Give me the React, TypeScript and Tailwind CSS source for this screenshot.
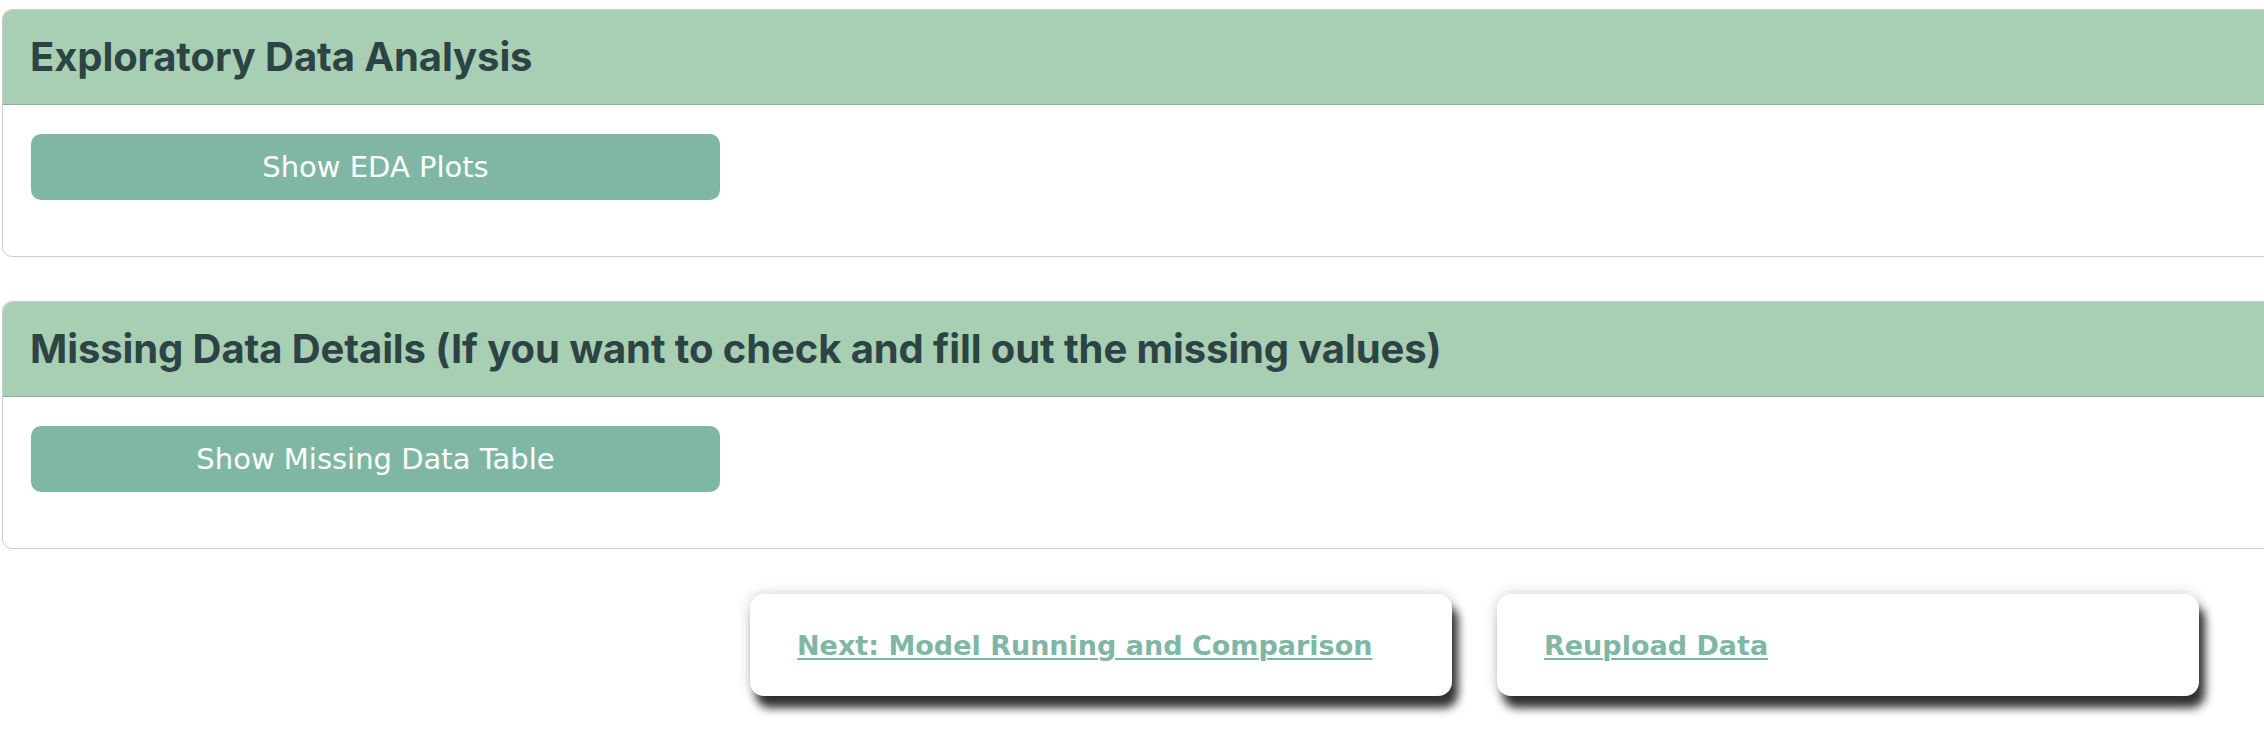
import React from 'react';

const sections = [
  { title: 'Exploratory Data Analysis', button: 'Show EDA Plots' },
  { title: 'Missing Data Details (If you want to check and fill out the missing values)', button: 'Show Missing Data Table' },
];

const links = ['Next: Model Running and Comparison', 'Reupload Data'];

const App: React.FC = () => {
  return (
    <div className="w-full min-h-[752px] overflow-hidden bg-white">
      <div className="pt-[9px] pl-[2px] flex flex-col gap-[44px] w-[2400px]">
        {sections.map((s) => (
          <div key={s.title} className="border border-[#cccccc] rounded-[10px] overflow-hidden bg-white">
            <div className="h-[95px] bg-[#a8cfb3] border-b border-[#8fae98] flex items-center px-[27px]">
              <h2 className="font-['Inter',sans-serif] font-bold text-[40px] leading-none text-[#2d4444] tracking-[-0.1px]">
                {s.title}
              </h2>
            </div>
            <div className="h-[151px] pt-[29px] px-[28px]">
              <button className="w-[689px] h-[66px] rounded-[10px] bg-[#80b7a4] text-white font-['DejaVu_Sans',sans-serif] text-[29px] leading-none">
                {s.button}
              </button>
            </div>
          </div>
        ))}
      </div>

      {/* Navigation links */}
      <div className="flex gap-[45px] pl-[750px] mt-[45px]">
        {links.map((l) => (
          <div
            key={l}
            className="w-[702px] h-[102px] rounded-[14px] bg-white flex items-center pl-[47px] shadow-[6px_12px_10px_rgba(0,0,0,0.8),0_0_14px_rgba(0,0,0,0.2)]"
          >
            <a href="#" className="font-['DejaVu_Sans',sans-serif] font-bold text-[27px] leading-none text-[#80b7a4] underline underline-offset-[3px] decoration-[2px]">
              {l}
            </a>
          </div>
        ))}
      </div>
    </div>
  );
};

export default App;
